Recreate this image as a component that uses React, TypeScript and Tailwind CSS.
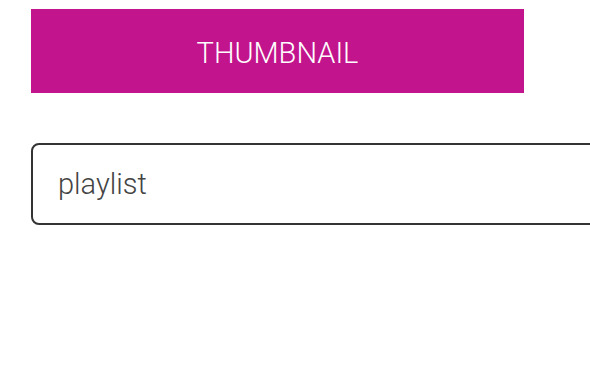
export default function App() {
  return (
    <div className="w-[590px] h-[380px] overflow-hidden bg-white pl-[31px] pt-[9px] font-['Roboto','Noto_Sans',sans-serif]">
      <div className="flex flex-col gap-[50px]">
        <button className="w-[493px] h-[84px] bg-[#c2148c] text-white text-[29px] font-light leading-none flex items-center justify-center pt-[4px] font-['Roboto',sans-serif]">
          THUMBNAIL
        </button>
        <div className="w-[620px] h-[82px] shrink-0 border-2 border-[#333333] rounded-[8px] flex items-center pl-[25px] pt-[2px]">
          <input
            className="w-full bg-transparent outline-none text-[29px] font-light text-[#444444] placeholder:text-[#444444] font-['Roboto',sans-serif]"
            placeholder="playlist"
          />
        </div>
      </div>
    </div>
  );
}
